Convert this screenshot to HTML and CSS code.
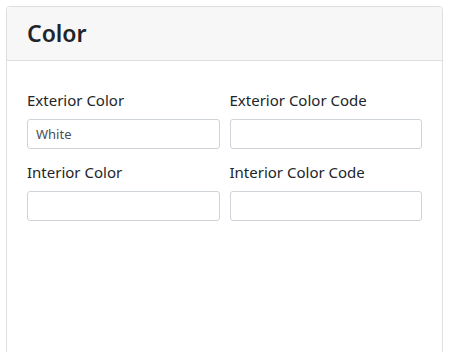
FILE: index.html
```html
<!DOCTYPE html>
<html lang="en">
<head>
    <meta charset="UTF-8">
    <meta name="viewport" content="width=device-width, initial-scale=1.0">
    <title>Color</title>
    <link rel="stylesheet" href="styles.css">
</head>
<body>
    <div class="card">
        <div class="card-header">
            <h2>Color</h2>
        </div>
        <div class="card-body">
            <div class="row">
                <div class="field">
                    <label for="extColor">Exterior Color</label>
                    <input type="text" id="extColor" value="White">
                </div>
                <div class="field">
                    <label for="extCode">Exterior Color Code</label>
                    <input type="text" id="extCode">
                </div>
            </div>
            <div class="row">
                <div class="field">
                    <label for="intColor">Interior Color</label>
                    <input type="text" id="intColor">
                </div>
                <div class="field">
                    <label for="intCode">Interior Color Code</label>
                    <input type="text" id="intCode">
                </div>
            </div>
        </div>
    </div>
</body>
</html>
```
FILE: styles.css
```css
* {
    margin: 0;
    padding: 0;
    box-sizing: border-box;
}

body {
    font-family: "Noto Sans", sans-serif;
    color: #212529;
    background-color: white;
    padding: 6px 9px 0 6px;
    height: 100vh;
    overflow: hidden;
}

.card {
    border: 1px solid #dfdfdf;
    border-radius: 4px;
    height: 420px;
}

.card-header {
    background-color: #f7f7f7;
    border-bottom: 1px solid #dfdfdf;
    border-radius: 4px 4px 0 0;
    padding: 12px 20px;
}

.card-header h2 {
    font-size: 23px;
    font-weight: 600;
    line-height: 29px;
}

.card-body {
    padding: 28px 20px;
}

.row {
    display: flex;
    gap: 10px;
    margin-bottom: 12px;
}

.field {
    flex: 1;
    min-width: 0;
    display: flex;
    flex-direction: column;
}

.field label {
    font-size: 15px;
    line-height: 22px;
    margin-bottom: 8px;
}

.field input {
    width: 100%;
    height: 30px;
    padding: 0 8px;
    font-family: "Noto Sans", sans-serif;
    font-size: 13px;
    color: #495057;
    border: 1px solid #ced4da;
    border-radius: 3px;
}
```
